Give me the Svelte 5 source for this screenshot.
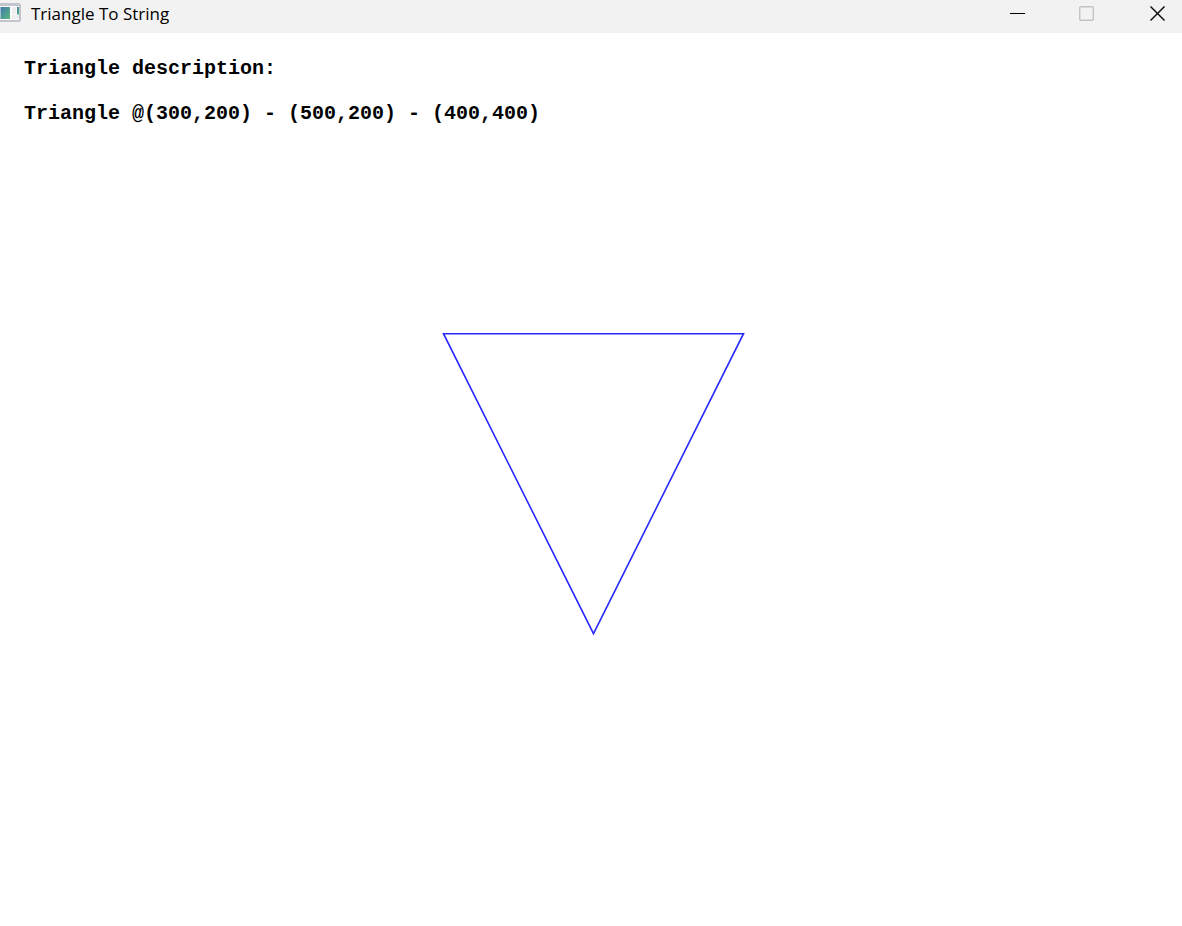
<script lang="ts">
	interface Point {
		x: number
		y: number
	}

	const title = 'Triangle To String'

	// one canvas unit is drawn as 1.5 screen pixels
	const scale = 1.5

	const triangle: Point[] = [
		{ x: 300, y: 200 },
		{ x: 500, y: 200 },
		{ x: 400, y: 400 }
	]

	function triangleToString(points: Point[]): string {
		return 'Triangle @' + points.map(p => `(${p.x},${p.y})`).join(' - ')
	}

	const outline = triangle.map(p => `${p.x * scale - 6.5},${p.y * scale + 0.7}`).join(' ')
</script>

<div class="window">
	<header class="titlebar">
		<svg class="app-icon" width="21" height="20" viewBox="0 0 21 20" aria-hidden="true">
			<defs>
				<linearGradient id="pane" x1="0" y1="0" x2="1" y2="1">
					<stop offset="0" stop-color="#3f78b0" />
					<stop offset="1" stop-color="#5bb87c" />
				</linearGradient>
			</defs>
			<rect x="-2" y="1" width="22" height="17" rx="1" fill="#fafafa" stroke="#b2b7c1" stroke-width="1.6" />
			<rect x="0" y="1" width="20" height="2" fill="#c0c5ce" />
			<rect x="0.5" y="4" width="9.5" height="12" fill="url(#pane)" />
			<rect x="12" y="4" width="4" height="7" fill="#eeeeee" />
			<rect x="12" y="12" width="7" height="4" fill="#eeeeee" />
			<rect x="17" y="4" width="2" height="7.5" fill="url(#pane)" />
		</svg>
		<h1>{title}</h1>
		<div class="controls">
			<button type="button" aria-label="Minimize">
				<svg width="16" height="16" viewBox="0 0 16 16">
					<path d="M1 7.5H16" stroke="#000" />
				</svg>
			</button>
			<button type="button" aria-label="Maximize" disabled>
				<svg width="16" height="16" viewBox="0 0 16 16">
					<rect x="0.75" y="0.75" width="13.5" height="13.5" rx="1" fill="none" stroke="#c3c3c3" stroke-width="1.4" />
				</svg>
			</button>
			<button type="button" aria-label="Close">
				<svg width="16" height="16" viewBox="0 0 16 16">
					<path d="M0.5 0.5L14.5 14.5M14.5 0.5L0.5 14.5" stroke="#111" stroke-width="1.5" />
				</svg>
			</button>
		</div>
	</header>

	<main class="canvas">
		<svg class="drawing" role="img" aria-label="Triangle">
			<polygon points={outline} fill="none" stroke="#2a2aff" stroke-width="1.6" />
		</svg>
		<p>Triangle description:</p>
		<p>{triangleToString(triangle)}</p>
	</main>
</div>

<style>
	:global(body) {
		margin: 0;
		background: #fff;
	}
	.window {
		display: flex;
		flex-direction: column;
		min-height: 100vh;
	}
	.titlebar {
		display: flex;
		align-items: flex-start;
		height: 33px;
		background: #f2f2f2;
	}
	.app-icon {
		margin-top: 3px;
	}
	h1 {
		flex: 1;
		margin: 0 0 0 10px;
		font: 400 17px/28px "Open Sans", "Noto Sans", sans-serif;
		color: #000;
	}
	.controls {
		display: flex;
	}
	.controls button {
		display: flex;
		align-items: center;
		justify-content: center;
		width: 70px;
		height: 28px;
		padding: 0;
		border: none;
		background: transparent;
	}
	.controls button:last-child {
		width: 49px;
		margin-left: 11px;
	}
	.canvas {
		position: relative;
		flex: 1;
		padding: 24px;
		background: #fff;
	}
	.drawing {
		position: absolute;
		inset: 0;
		width: 100%;
		height: 100%;
	}
	p {
		margin: 0 0 21px;
		font: 700 20px/24px "Liberation Mono", monospace;
		color: #000;
	}
</style>
